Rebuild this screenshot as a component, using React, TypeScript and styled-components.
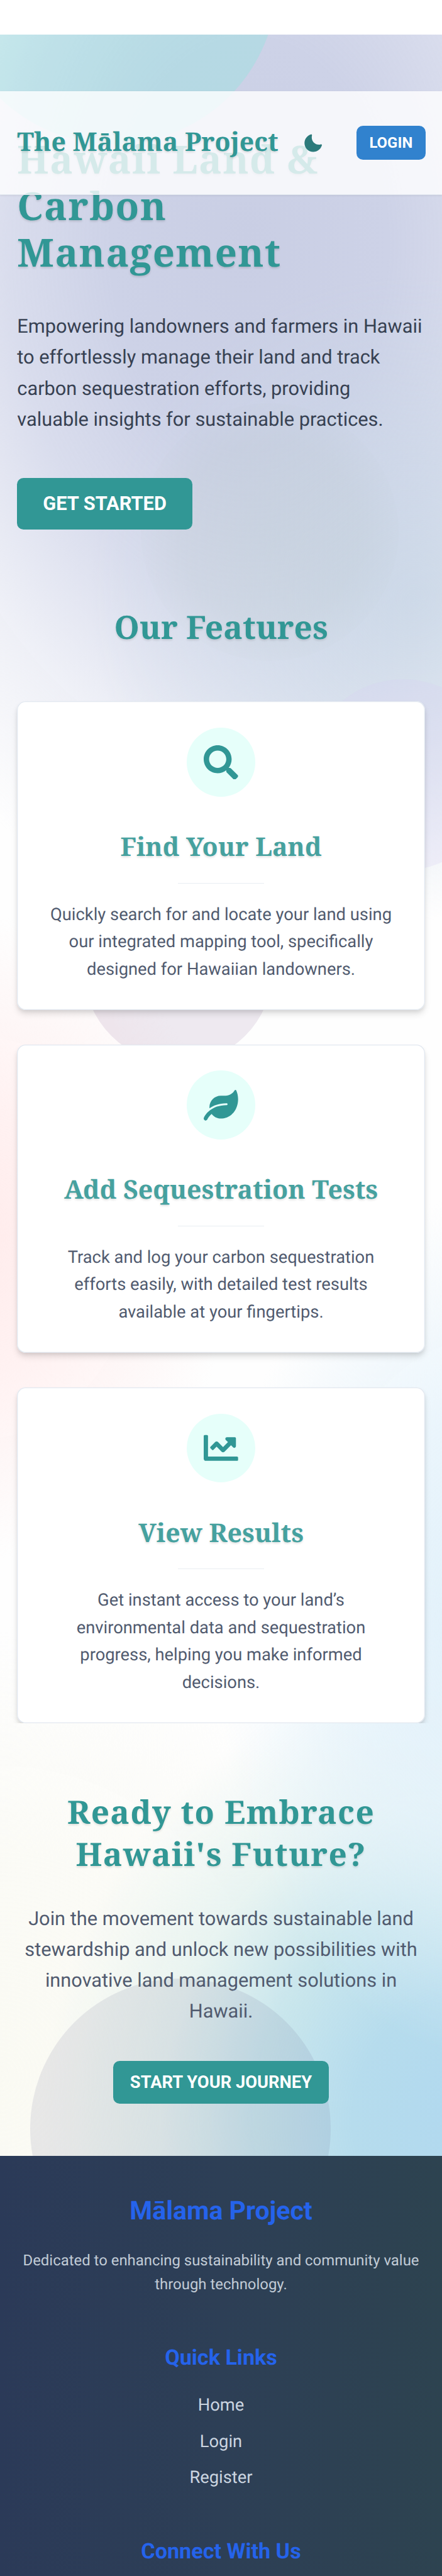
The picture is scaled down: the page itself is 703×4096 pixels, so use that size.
import React from "react";
import styled, { createGlobalStyle } from "styled-components";
import { FaSearch, FaLeaf, FaChartLine } from "react-icons/fa";

/* One design unit of the mobile layout, in device pixels. */
const UNIT = 1.70868;
const u = (n: number) => `${+(n * UNIT).toFixed(2)}px`;

const serif = `"Noto Serif", "Liberation Serif", serif`;
const sans = `Roboto, "Liberation Sans", sans-serif`;

const color = {
  teal: "#319795",
  tealDark: "#2c7a7b",
  blue: "#3182ce",
  link: "#2563eb",
  text: "#374152",
  muted: "#515b6f",
  border: "#e2e8f0",
};

const GlobalStyle = createGlobalStyle`
  *, *::before, *::after { box-sizing: border-box; }
  html { background: #fff; }
  body {
    margin: 0;
    font-family: ${sans};
    text-rendering: geometricPrecision;
    -webkit-font-smoothing: antialiased;
  }
  h1, h2, h3, h4, p, ul { margin: 0; padding: 0; }
  ul { list-style: none; }
`;

const Page = styled.div`
  position: relative;
  height: 4096px;
  overflow: hidden;
  padding-top: ${u(32)};
  background: #fff;
`;

const wash = (rx: number, ry: number, x: number, y: number, stops: string) =>
  `radial-gradient(${u(rx)} ${u(ry)} at ${u(x)} ${u(y)}, ${stops})`;

const Backdrop = styled.main`
  position: relative;
  overflow: hidden;
  height: ${u(1974.1)};
  background:
    ${wash(300, 300, 385, 525, "rgba(198,213,229,0.75) 0%, rgba(200,214,230,0.45) 50%, rgba(220,226,242,0) 100%")},
    ${wash(430, 640, 232, 195, "#c9cee4 0%, #cdd2e7 30%, rgba(213,217,235,0.9) 52%, rgba(224,227,240,0.5) 76%, rgba(240,241,248,0) 100%")},
    ${wash(240, 300, -20, 1120, "#ffecec 0%, rgba(255,238,238,0.8) 40%, rgba(255,242,242,0) 100%")},
    ${wash(250, 400, 450, 1480, "#e0f0fa 0%, rgba(228,242,251,0.75) 50%, rgba(240,247,254,0) 100%")},
    ${wash(400, 420, 440, 1940, "#b0d8ef 0%, #b6dced 28%, rgba(192,226,234,0.85) 50%, rgba(214,236,234,0.5) 73%, rgba(235,245,244,0) 100%")},
    ${wash(380, 420, 0, 1900, "#fafaf3 0%, rgba(250,250,244,0.8) 50%, rgba(252,253,250,0) 100%")},
    #fefefe;
`;

const Disc = styled.span<{ $size: number; $x: number; $y: number; $fill: string }>`
  position: absolute;
  left: ${(p) => u(p.$x - p.$size / 2)};
  top: ${(p) => u(p.$y - p.$size / 2)};
  width: ${(p) => u(p.$size)};
  height: ${(p) => u(p.$size)};
  border-radius: 50%;
  background: ${(p) => p.$fill};
`;

const Header = styled.header`
  position: absolute;
  top: ${u(85)};
  left: 0;
  right: 0;
  z-index: 10;
  height: ${u(96.4)};
  display: flex;
  align-items: center;
  padding: 0 ${u(15.4)} 0 ${u(16)};
  background: rgba(255, 255, 255, 0.8);
  border-bottom: 1px solid ${color.border};
  box-shadow: 0 1px 3px rgba(0, 0, 0, 0.08);
`;

const Brand = styled.h1`
  flex: 1;
  margin-bottom: ${u(1.5)};
  font: 700 ${u(24)} / ${u(28.8)} ${serif};
  color: ${color.teal};
  text-shadow: 0 ${u(1)} ${u(2)} rgba(0, 0, 0, 0.12);
  white-space: nowrap;
`;

const ThemeToggle = styled.button`
  width: ${u(40)};
  height: ${u(40)};
  margin-right: ${u(20)};
  padding: 0;
  border: 0;
  background: none;
  color: ${color.tealDark};
  display: grid;
  place-items: center;

  svg { width: ${u(18)}; height: ${u(18)}; display: block; }
`;

const Button = styled.button<{ $w: number; $h: number; $font: number; $bg?: string }>`
  display: flex;
  align-items: center;
  justify-content: center;
  width: ${(p) => u(p.$w)};
  height: ${(p) => u(p.$h)};
  padding: 0;
  border: 0;
  border-radius: ${u(6)};
  background: ${(p) => p.$bg ?? color.teal};
  color: #fff;
  font: 700 ${(p) => u(p.$font)} / 1.2 ${sans};
  text-transform: uppercase;
  white-space: nowrap;
`;

const Hero = styled.section`
  position: relative;
  padding: ${u(95)} ${u(16)} 0;
`;

const HeroTitle = styled.h2`
  font: 700 ${u(36)} / ${u(43.2)} ${serif};
  letter-spacing: 0.025em;
  color: ${color.teal};
  text-shadow: 0 ${u(1)} ${u(2)} rgba(0, 0, 0, 0.14);
`;

const HeroText = styled.p`
  margin: ${u(32.6)} 0 ${u(40.7)};
  font-size: ${u(18)};
  line-height: ${u(28.8)};
  color: ${color.text};
`;

const Features = styled.section`
  position: relative;
  overflow: hidden;
  padding: ${u(72.8)} ${u(16)} 0;
`;

const SectionTitle = styled.h2`
  font: 700 ${u(30)} / ${u(36)} ${serif};
  color: ${color.teal};
  text-align: center;
  text-shadow: 0 ${u(1)} ${u(2)} rgba(0, 0, 0, 0.12);
`;

const CardList = styled.div`
  display: grid;
  gap: ${u(32.2)};
  margin-top: ${u(51)};
`;

const Card = styled.article`
  display: flex;
  flex-direction: column;
  align-items: center;
  padding: ${u(24.5)} ${u(24)};
  background: #fff;
  border-radius: ${u(8)};
  box-shadow: inset 0 0 0 1.3px ${color.border}, 0 ${u(4)} ${u(6)} ${u(-1)} rgba(0, 0, 0, 0.12),
    0 ${u(2)} ${u(4)} ${u(-1)} rgba(0, 0, 0, 0.08);
  text-align: center;
`;

const IconBadge = styled.div`
  display: grid;
  place-items: center;
  width: ${u(64)};
  height: ${u(64)};
  border-radius: 50%;
  background: #e6fffa;
  color: ${color.teal};

  svg { width: ${u(32)}; height: ${u(32)}; display: block; }
`;

const CardTitle = styled.h3`
  margin-top: ${u(32.5)};
  font: 700 ${u(24)} / ${u(28.8)} ${serif};
  color: #46a19f;
  text-shadow: 0 ${u(1)} ${u(2)} rgba(0, 0, 0, 0.12);
`;

const Divider = styled.hr`
  width: ${u(80)};
  height: 1px;
  margin: ${u(19.1)} 0 ${u(16.1)};
  border: 0;
  background: #e9edf2;
`;

const CardText = styled.p`
  max-width: ${u(330)};
  font-size: ${u(16)};
  line-height: ${u(25.6)};
  color: ${color.muted};
`;

const CallToAction = styled.section`
  position: relative;
  display: flex;
  flex-direction: column;
  align-items: center;
  padding: ${u(63.5)} ${u(16)} ${u(48)};
  text-align: center;
`;

const CallTitle = styled.h2`
  max-width: ${u(340)};
  font: 700 ${u(30)} / ${u(39.3)} ${serif};
  letter-spacing: 0.025em;
  color: ${color.teal};
  text-shadow: 0 ${u(1)} ${u(2)} rgba(0, 0, 0, 0.12);
`;

const CallText = styled.p`
  margin: ${u(25.3)} 0 ${u(32)};
  font-size: ${u(18)};
  line-height: ${u(28.8)};
  color: ${color.muted};
`;

const Footer = styled.footer`
  display: flex;
  flex-direction: column;
  align-items: center;
  height: ${u(400)};
  padding: ${u(37.3)} ${u(16)} 0;
  background: linear-gradient(to right, #2b3a58 0%, #2d3f56 50%, #2d4350 100%);
  color: #cbd5e0;
  text-align: center;
`;

const FooterBrand = styled.h3`
  font: 700 ${u(24)} / ${u(28.8)} ${sans};
  color: ${color.link};
`;

const FooterText = styled.p`
  margin: ${u(20.1)} 0 ${u(45.5)};
  font-size: ${u(14)};
  line-height: ${u(22.4)};
  color: #c1cbd6;
`;

const FooterHeading = styled.h4`
  font: 700 ${u(20)} / ${u(24)} ${sans};
  color: ${color.link};
`;

const LinkList = styled.ul`
  display: grid;
  gap: ${u(8)};
  margin: ${u(19.3)} 0 ${u(44.2)};
  font-size: ${u(16)};
  line-height: ${u(25.6)};
`;

const MoonIcon = () => (
  <svg viewBox="0 0 24 24" fill="currentColor" aria-hidden="true">
    <path d="M21.4,13.7C20.6,13.9,19.8,14,19,14c-5,0-9-4-9-9c0-0.8,0.1-1.6,0.3-2.4c0.1-0.3,0-0.7-0.3-1c-0.3-0.3-0.6-0.4-1-0.3C4.3,2.7,1,7.1,1,12c0,6.1,4.9,11,11,11c4.9,0,9.3-3.3,10.6-8.1c0.1-0.3,0-0.7-0.3-1C22.1,13.7,21.7,13.6,21.4,13.7z" />
  </svg>
);

const features = [
  {
    icon: <FaSearch />,
    title: "Find Your Land",
    text: "Quickly search for and locate your land using our integrated mapping tool, specifically designed for Hawaiian landowners.",
  },
  {
    icon: <FaLeaf />,
    title: "Add Sequestration Tests",
    text: "Track and log your carbon sequestration efforts easily, with detailed test results available at your fingertips.",
  },
  {
    icon: <FaChartLine />,
    title: "View Results",
    text: "Get instant access to your land’s environmental data and sequestration progress, helping you make informed decisions.",
  },
];

/* Translucent discs that float behind the content. */
const discs = [
  { $size: 304, $x: 106, $y: -50, $fill: "rgba(129,235,222,0.3)" },
  {
    $size: 240,
    $x: 251,
    $y: 463,
    $fill: "radial-gradient(closest-side, rgba(153,168,152,0.1) 0%, rgba(153,168,152,0.08) 70%, rgba(153,168,152,0.02) 100%)",
  },
  { $size: 178, $x: 375, $y: 689, $fill: "rgba(214,206,245,0.25)" },
  { $size: 176, $x: 166, $y: 869.6, $fill: "rgba(122,80,138,0.12)" },
  { $size: 280, $x: 167.8, $y: 1949, $fill: "rgba(111,111,143,0.13)" },
];

export default function App() {
  return (
    <>
      <GlobalStyle />
      <Page>
        <Header>
          <Brand>The Mālama Project</Brand>
          <ThemeToggle aria-label="Toggle dark mode">
            <MoonIcon />
          </ThemeToggle>
          <Button $w={64.2} $h={32} $font={14} $bg={color.blue}>
            Login
          </Button>
        </Header>

        <Backdrop>
          {discs.map((disc) => (
            <Disc key={disc.$y} {...disc} />
          ))}

          <Hero>
            <HeroTitle>Hawaii Land &amp; Carbon Management</HeroTitle>
            <HeroText>
              Empowering landowners and farmers in Hawaii to effortlessly manage their land and track
              carbon sequestration efforts, providing valuable insights for sustainable practices.
            </HeroText>
            <Button $w={163} $h={48} $font={18}>
              Get Started
            </Button>
          </Hero>

          <Features>
            <SectionTitle>Our Features</SectionTitle>
            <CardList>
              {features.map((f) => (
                <Card key={f.title}>
                  <IconBadge>{f.icon}</IconBadge>
                  <CardTitle>{f.title}</CardTitle>
                  <Divider />
                  <CardText>{f.text}</CardText>
                </Card>
              ))}
            </CardList>
          </Features>

          <CallToAction>
            <CallTitle>Ready to Embrace Hawaii's Future?</CallTitle>
            <CallText>
              Join the movement towards sustainable land stewardship and unlock new possibilities
              with innovative land management solutions in Hawaii.
            </CallText>
            <Button $w={201.2} $h={40} $font={16}>
              Start Your Journey
            </Button>
          </CallToAction>
        </Backdrop>

        <Footer>
          <FooterBrand>Mālama Project</FooterBrand>
          <FooterText>
            Dedicated to enhancing sustainability and community value through technology.
          </FooterText>
          <FooterHeading>Quick Links</FooterHeading>
          <LinkList>
            <li>Home</li>
            <li>Login</li>
            <li>Register</li>
          </LinkList>
          <FooterHeading>Connect With Us</FooterHeading>
        </Footer>
      </Page>
    </>
  );
}
